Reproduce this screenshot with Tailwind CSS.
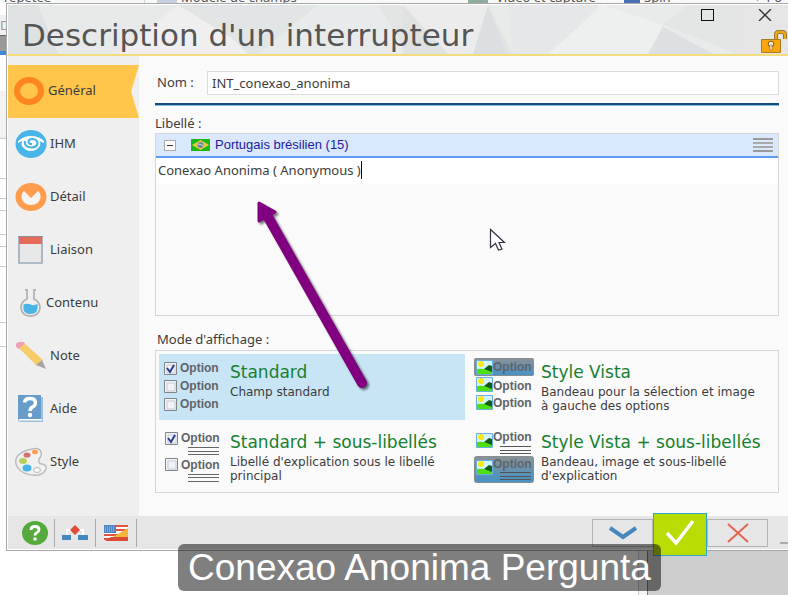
<!DOCTYPE html>
<html lang="fr">
<head>
  <meta charset="UTF-8" />
  <meta name="viewport" content="width=device-width, initial-scale=1.0" />
  <title>Description d'un interrupteur</title>
  <script src="https://cdn.jsdelivr.net/npm/@tailwindcss/browser@4"></script>
</head>
<body class="relative flex flex-col h-screen overflow-hidden bg-white text-[13px] text-[#3c3c3c] font-['Noto_Sans',sans-serif]">
  <!-- Ribbon of the window behind -->
  <div class="flex items-end h-[3px] shrink-0 overflow-hidden bg-[#f8f8f8] text-[#555] leading-3">
    <span class="w-36 shrink-0 pl-1">repetee =</span>
    <span class="flex items-end w-80 shrink-0 gap-1 pl-3 border-l border-gray-300"><i class="w-5 h-3 bg-[#c5cfe0]"></i>Modèle de champs</span>
    <span class="flex items-end w-40 shrink-0 gap-2 pl-1"><i class="w-5 h-3 bg-[#8fac9c]"></i>Vidéo et capture</span>
    <span class="flex items-end w-32 shrink-0 gap-1"><i class="w-4 h-3 bg-[#4770b5]"></i>Spin</span>
    <span class="shrink-0">✦ Po</span>
  </div>

  <div class="flex shrink-0">
    <!-- Left edge of the window behind -->
    <div class="w-[6px] shrink-0 overflow-hidden bg-white">
      <div class="h-3 bg-white"></div>
      <div class="h-5 bg-[#f0f0f0] text-[#999] leading-5">De</div>
      <div class="h-4 bg-[#999] border-t border-[#666]"></div>
      <div class="h-1 bg-[#3c8ad8]"></div>
      <div class="h-9 bg-white"></div>
      <div class="h-12 bg-[#f3f3f3] border-b border-[#ccc]"></div>
      <div class="h-10 border-b border-[#ccc]"></div>
      <div class="h-5 border-b border-[#ccc]"></div>
      <div class="h-3 border-b border-[#ccc]"></div>
      <div class="h-6 border-b border-[#ccc]"></div>
      <div class="h-3 border-b border-[#ccc]"></div>
      <div class="h-5 border-b border-[#ccc]"></div>
      <div class="h-14 border-b border-[#ccc]"></div>
      <div class="h-6 border-b border-[#ccc]"></div>
    </div>

    <!-- Dialog -->
    <main class="flex-1 min-w-0 border-t border-l border-b border-[#a8a8a8] bg-[#fafafa]">
      <header class="relative flex items-center justify-between h-[52px] pl-[14px] border-t border-l border-t-white border-l-white border-b-2 border-b-[#f4dc7c] bg-[#e3e5e5]">
        <svg class="absolute inset-0 w-full h-full" viewBox="0 0 780 50" preserveAspectRatio="none" aria-hidden="true">
          <path d="M0 0H170L120 50H0z" fill="#e8e9e9"/>
          <path d="M30 0L50 50H0V0z" fill="#dfe2e2"/>
          <path d="M170 0L110 50H250z" fill="#efefef"/>
          <path d="M190 0H310L280 50H240z" fill="#e2e5e5"/>
          <path d="M310 0L250 50H400L370 0z" fill="#e8ebeb"/>
          <path d="M395 0H480L500 50H395z" fill="#ececec"/>
          <path d="M395 0L440 50H395z" fill="#e0e2e2"/>
          <path d="M480 0L500 50H465z" fill="#dcdfe1"/>
          <path d="M480 0L505 50H780V0z" fill="#e9eaea"/>
          <path d="M500 0H590L545 50H505z" fill="#e5e7e8"/>
          <path d="M595 0L540 50H640L660 22z" fill="#eeefef"/>
          <path d="M655 22L640 50H705z" fill="#dde0e2"/>
          <path d="M655 20L730 50V0H680z" fill="#e4e5e5"/>
          <path d="M730 0H780V50H730z" fill="#e6e6e6"/>
        </svg>
        <h1 class="relative pt-[10px] text-[31px] leading-10 text-[#555] whitespace-nowrap font-['DejaVu_Sans',sans-serif]">Description d'un interrupteur</h1>
        <div class="relative flex flex-col self-stretch items-end justify-between pt-1">
          <div class="flex items-center gap-11 pr-4">
            <button type="button" aria-label="Agrandir" class="block w-[13px] h-3 border border-[#111]"></button>
            <button type="button" aria-label="Fermer" class="block">
              <svg class="w-[14px] h-3" viewBox="0 0 14 12" stroke="#333" stroke-width="1.4"><path d="M1 0l12 12M13 0L1 12"/></svg>
            </button>
          </div>
          <svg class="w-[27px] h-6" viewBox="0 0 27 24" role="img" aria-label="Déverrouillé">
            <path d="M15 10V5q0-3 3-3h3q3 0 3 3v4" fill="none" stroke="#7c6a2c" stroke-width="4"/>
            <path d="M15 10V5q0-3 3-3h3q3 0 3 3v4" fill="none" stroke="#f0a818" stroke-width="2.5"/>
            <path d="M.5 9.5h19v13h-19z" fill="#f8a60c" stroke="#a8791d"/>
            <circle cx="10" cy="14" r="2.8" fill="#f8f1d8" stroke="#795a1b"/>
            <path d="M9 15h2v5H9z" fill="#fff" stroke="#795a1b" stroke-width=".6"/>
          </svg>
        </div>
      </header>

      <div class="flex border-l border-white">
        <!-- Sidebar -->
        <nav class="w-[131px] h-[460px] shrink-0 pt-[9px] bg-[#efefef]">
          <a href="#general" class="flex items-center h-[53px] gap-[3px] pb-[2px] pl-[5px] bg-[#ffc64b] [clip-path:polygon(0_0,100%_0,94%_50%,100%_100%,0_100%)]">
            <svg class="w-8 h-8" viewBox="0 0 32 32"><ellipse cx="16" cy="16" rx="12" ry="11" fill="none" stroke="#ff8520" stroke-width="6"/></svg>
            Général
          </a>
          <a href="#ihm" class="flex items-center h-[53px] gap-[3px] pb-[2px] pl-[7px]">
            <svg class="w-8 h-8" viewBox="0 0 32 32"><ellipse cx="16" cy="16" rx="15.500" ry="14" fill="#48b4e7"/><path d="M3 13Q9 8 16 8q8 0 13 5v2q-3-1-4-2 1 4-1 6-3 4-8 4-6 0-9-5-1-2 0-5-2 1-4 2z" fill="#fff"/><path d="M10 13q-1 6 6 6.500 6 0 6.500-4 0-4-5-4.500-4 0-4 3 .5 2 3.500 2" fill="none" stroke="#48b4e7" stroke-width="2.200"/></svg>
            IHM
          </a>
          <a href="#detail" class="flex items-center h-[53px] gap-[3px] pb-[2px] pl-[7px]">
            <svg class="w-8 h-8" viewBox="0 0 32 32"><ellipse cx="16" cy="16" rx="15.500" ry="14" fill="#ff9c4e"/><path d="M9 10q-3 3-2.500 7 2 7 9.500 7t9.500-7q.5-4-2.500-7l-7 7z" fill="#f4f4f4"/></svg>
            Détail
          </a>
          <a href="#liaison" class="flex items-center h-[53px] gap-[3px] pb-[2px] pl-[7px]">
            <svg class="w-8 h-8" viewBox="0 0 32 32"><path d="M4 3h23v26H4z" fill="#e8e8e8" stroke="#9babb8" stroke-width="1.6"/><path d="M4 3h23v7H4z" fill="#e66a5a"/><path d="M3 2.500h25" stroke="#8d8f9c"/></svg>
            Liaison
          </a>
          <a href="#contenu" class="flex items-center h-[53px] gap-[3px] pb-[2px] pl-[7px]">
            <svg class="w-7 h-8" viewBox="0 0 28 32"><path d="M10 3h2v9Q5.500 15 6 21q1 8 9.500 8t9.500-8Q25 15 19 12V3h2" fill="none" stroke="#b3b3b3" stroke-width="1.8"/><path d="M8.500 17.500q4-1.500 7 0t7-.5q1.500 10-7 10t-7-9.500z" fill="#48b4e7"/></svg>
            Contenu
          </a>
          <a href="#note" class="flex items-center h-[53px] gap-[3px] pb-[2px] pl-[7px]">
            <svg class="w-8 h-8" viewBox="0 0 32 32"><path d="M4 8L9 3l19 17-6 6z" fill="#f8cb69"/><path d="M1 6q-1-3 3-4 4-1 6 1L4 9Q1 8 1 6z" fill="#efa0b4"/><path d="M27 20l4 9-10-4z" fill="#a6a6a6"/></svg>
            Note
          </a>
          <a href="#aide" class="flex items-center h-[53px] gap-[3px] pb-[2px] pl-[7px]">
            <svg class="w-8 h-8" viewBox="0 0 32 32"><path d="M7 4h21v25H6q-3 0-3-3z" fill="#9bbfdf"/><path d="M3 26h24v1.500H4z" fill="#fff"/><path d="M3 2h23v24H4v2l-1-2z" fill="#689dca"/><path d="M9.500 9.500q.5-4 5.500-4t5.500 4q0 3-3 4.500-2.500 1.500-2.500 4" fill="none" stroke="#fff" stroke-width="3.400"/><circle cx="15" cy="22" r="2.200" fill="#fff"/></svg>
            Aide
          </a>
          <a href="#style" class="flex items-center h-[53px] gap-[3px] pb-[2px] pl-[7px]">
            <svg class="w-8 h-8" viewBox="0 0 32 32"><path d="M17 3Q24 1 26 6q1 4-2 7-1 5 3 5 5 1 4 5-2 5-8 6-10 1-17-4-8-7-4-14Q6 5 17 3z" fill="#f1f1f1" stroke="#bcbcbc" stroke-width="1.500"/><ellipse cx="20" cy="6" rx="3" ry="2.200" fill="#ff9c4e"/><ellipse cx="12" cy="9" rx="3.500" ry="2.600" fill="#d8706a"/><ellipse cx="8" cy="15" rx="4" ry="3" fill="#b9d058"/><ellipse cx="12" cy="22" rx="4.500" ry="3.500" fill="#48b4e7"/><ellipse cx="22" cy="24" rx="3.500" ry="2.500" fill="#f8f8f8" stroke="#b8b8b8"/></svg>
            Style
          </a>
        </nav>

        <!-- Content -->
        <section class="flex-1 min-w-0 pl-4 pr-[9px] pt-[15px]">
          <div class="flex items-center">
            <label for="nom" class="w-[52px] shrink-0 pl-[2px]">Nom :</label>
            <input id="nom" type="text" value="INT_conexao_anonima" class="flex-1 min-w-0 h-6 px-1 border border-[#dcdcdc] bg-white" />
          </div>
          <hr class="h-[3px] mt-2 border-0 border-t-2 border-[#184a80] bg-[#80c4e4]" />

          <label for="libelle" class="block mt-2 leading-[18px]">Libellé :</label>
          <div class="h-[183px] mt-px border border-[#d5d5da]">
            <div class="flex items-center h-6 pl-2 pr-[5px] border-b-2 border-[#5c9cf5] bg-[#dae8fd] text-[#1c1ca0] font-['Liberation_Sans',sans-serif]">
              <button type="button" aria-label="Réduire" class="flex items-center justify-center w-3 h-[11px] mr-[15px] border border-[#aaa] bg-white"><span class="w-[6px] h-px bg-[#333]"></span></button>
              <svg class="w-[19px] h-3 mr-[5px]" viewBox="0 0 19 12"><path d="M0 0h19v12H0z" fill="#18b818"/><path d="M9.500 1L18 6l-8.500 5L1 6z" fill="#e8c840"/><circle cx="9.500" cy="6" r="3" fill="#6a88a0"/><path d="M7 5q3 0 5 2" stroke="#d0d8d8" fill="none"/></svg>
              <span class="flex-1">Portugais brésilien (15)</span>
              <button type="button" aria-label="Menu" class="flex flex-col gap-[2px]">
                <span class="w-5 h-[2px] bg-[#999]"></span>
                <span class="w-5 h-[2px] bg-[#aaa]"></span>
                <span class="w-5 h-[2px] bg-[#aaa]"></span>
                <span class="w-5 h-[2px] bg-[#999]"></span>
              </button>
            </div>
            <div class="flex items-center h-[26px] pb-[2px] pl-[2px] bg-white">
              <input id="libelle" type="text" value="Conexao Anonima ( Anonymous )" class="field-sizing-content h-5" />
              <span class="w-px h-[18px] bg-black"></span>
            </div>
          </div>

          <fieldset class="mt-[11px]">
            <legend class="pl-[2px] leading-6">Mode d'affichage :</legend>
            <div class="grid grid-cols-2 gap-x-1 gap-y-1 h-[143px] mt-[-1px] p-[3px] border border-[#d5d5da] font-['DejaVu_Sans',sans-serif] text-xs leading-[14px]">
              <label class="relative flex gap-[7px] pl-[5px] bg-[#c8e5f5]">
                <input type="radio" name="mode" class="sr-only" checked />
                <svg class="w-[59px] h-[66px] shrink-0 font-['Liberation_Sans',sans-serif] text-xs font-bold" viewBox="0 0 59 66" fill="#606468">
                  <g fill="#f0f3f8" stroke="#828488"><path d="M.5 8.500h12v12H.5zM.5 26.500h12v12H.5zM.5 44.500h12v12H.5z"/><path d="M3 11h8v8H3zM3 29h8v8H3zM3 47h8v8H3z" stroke="#c5cbd5"/></g>
                  <path d="M3 14l3 4 4-7" fill="none" stroke="#283c94" stroke-width="2"/>
                  <text x="16" y="18">Option</text><text x="16" y="36">Option</text><text x="16" y="54">Option</text>
                </svg>
                <span class="pt-[5px]"><b class="block text-[17px] leading-[26px] font-normal text-[#168030]">Standard</b>Champ standard</span>
              </label>
              <label class="relative flex gap-[7px] pl-[5px]">
                <input type="radio" name="mode" class="sr-only" />
                <svg class="w-[60px] h-[66px] shrink-0 font-['Liberation_Sans',sans-serif] text-xs font-bold" viewBox="0 0 60 66" fill="#606468">
                  <defs>
                    <linearGradient id="band" x2="0" y2="1"><stop stop-color="#8b9196"/><stop offset="1" stop-color="#4293c6"/></linearGradient>
                    <g id="pic"><path d="M.5.5h16v14H.5z" fill="#d2f3fb" stroke="#69aee0"/><circle cx="5" cy="4" r="3" fill="#f8e818"/><path d="M1 9q8-1 15 2v3H1z" fill="#4de010"/><path d="M8 9l5-4 3 1v6z" fill="#155b18"/></g>
                  </defs>
                  <rect x=".5" y="4.500" width="59" height="17" rx="1" fill="url(#band)" stroke="#8a8d90"/>
                  <use href="#pic" x="2" y="6"/><use href="#pic" x="2" y="23"/><use href="#pic" x="2" y="41"/>
                  <text x="19" y="17">Option</text><text x="19" y="36">Option</text><text x="19" y="53">Option</text>
                </svg>
                <span class="pt-[5px]"><b class="block text-[17px] leading-[26px] font-normal text-[#168030]">Style Vista</b>Bandeau pour la sélection et image<br />à gauche des options</span>
              </label>
              <label class="relative flex gap-[7px] pl-[5px]">
                <input type="radio" name="mode" class="sr-only" />
                <svg class="w-[59px] h-[66px] shrink-0 font-['Liberation_Sans',sans-serif] text-xs font-bold" viewBox="0 0 59 66" fill="#606468">
                  <g fill="#f0f3f8" stroke="#828488"><path d="M1.500 8.500h12v12h-12zM1.500 34.500h12v12h-12z"/><path d="M4 11h8v8H4zM4 37h8v8H4z" stroke="#c5cbd5"/></g>
                  <path d="M4 14l3 4 4-7" fill="none" stroke="#283c94" stroke-width="2"/>
                  <text x="17" y="18">Option</text><text x="17" y="45">Option</text>
                  <path d="M24 23.500h31M24 27.500h31M24 30.500h31M24 50.500h31M24 53.500h31M24 57.500h31" stroke="#666"/>
                </svg>
                <span class="pt-[5px]"><b class="block text-[17px] leading-[26px] font-normal text-[#168030]">Standard + sous-libellés</b>Libellé d'explication sous le libellé<br />principal</span>
              </label>
              <label class="relative flex gap-[7px] pl-[5px]">
                <input type="radio" name="mode" class="sr-only" />
                <svg class="w-[60px] h-[66px] shrink-0 font-['Liberation_Sans',sans-serif] text-xs font-bold" viewBox="0 0 60 66" fill="#606468">
                  <rect x=".5" y="32.500" width="59" height="26" rx="2" fill="url(#band)" stroke="#8a8d90"/>
                  <use href="#pic" x="2" y="9"/><use href="#pic" x="2" y="36"/>
                  <text x="19" y="17">Option</text><text x="19" y="44">Option</text>
                  <path d="M26 22.500h31M26 26.500h31M26 29.500h31M26 48.500h31M26 52.500h31M26 55.500h31" stroke="#555"/>
                </svg>
                <span class="pt-[5px]"><b class="block text-[17px] leading-[26px] font-normal text-[#168030] whitespace-nowrap">Style Vista + sous-libellés</b>Bandeau, image et sous-libellé<br />d'explication</span>
              </label>
            </div>
          </fieldset>
        </section>
      </div>

      <!-- Toolbar -->
      <footer class="flex items-center justify-between h-[34px] pl-px border-l border-b border-white bg-[#e6e6e6]">
        <div class="flex h-7">
          <button type="button" aria-label="Aide" class="flex items-center justify-end w-[46px] pr-[6px] border-r border-[#aaa]">
            <svg class="w-[26px] h-6" viewBox="0 0 26 24"><ellipse cx="13" cy="12" rx="13" ry="12" fill="#56aa3d"/><path d="M9 9q0-3.500 4-3.500t4 3q0 2-2 3t-2 3" fill="none" stroke="#fff" stroke-width="2.800"/><circle cx="13" cy="18" r="1.800" fill="#fff"/></svg>
          </button>
          <button type="button" aria-label="Arborescence" class="flex items-center justify-center w-[41px] border-r border-[#aaa]">
            <svg class="w-[26px] h-4" viewBox="0 0 26 16"><path d="M5 10V5h16v5" fill="none" stroke="#fff" stroke-width="2"/><path d="M13 0l5 5-5 5-5-5z" fill="#e04c38"/><path d="M0 10h9v5H0zM16 10h10v5H16z" fill="#4688be"/></svg>
          </button>
          <button type="button" aria-label="Langues" class="flex items-center justify-center w-[41px] border-r border-[#aaa]">
            <svg class="w-6 h-4" viewBox="0 0 24 16"><path d="M0 0h24v16H0z" fill="#fff"/><path d="M12 0h12v2H12zM12 4h12v2H12zM0 9h14v2H0zM0 13h10v2H0z" fill="#e25443"/><path d="M0 0h12v8H0z" fill="#4f86bd"/><path d="M1 2h10M1 4h10M1 6h10" stroke="#a8c8e6" stroke-dasharray="1 1"/><path d="M24 3v13H2z" fill="#f3b73d"/><path d="M7 12L1 16h23v-4z" fill="#dc4937"/></svg>
          </button>
        </div>
        <div class="flex items-center">
          <button type="button" aria-label="Suivant" class="flex items-center justify-center w-[61px] h-7 border border-[#b4b4b4]">
            <svg class="w-7 h-[14px]" viewBox="0 0 28 14"><path d="M1 2l13 9L27 2" fill="none" stroke="#4688be" stroke-width="4"/></svg>
          </button>
          <button type="button" aria-label="Valider" class="relative z-10 flex items-center justify-center w-[54px] h-[43px] -mt-1 -mb-2 pb-1 border border-[#30a5cf] bg-[#b9dc04]">
            <svg class="w-7 h-7" viewBox="0 0 28 28"><path d="M1 14l9 10L27 2" fill="none" stroke="#fff" stroke-width="3.500"/></svg>
          </button>
          <button type="button" aria-label="Annuler" class="flex items-center justify-center w-[61px] h-7 border border-[#b4b4b4]">
            <svg class="w-[22px] h-5" viewBox="0 0 22 20"><path d="M1 1l20 18M21 1L1 19" stroke="#e06450" stroke-width="2"/></svg>
          </button>
          <span class="w-2 h-[2px] mt-5 ml-3 bg-[#aaa]"></span>
        </div>
      </footer>
    </main>
  </div>

  <!-- Bottom of the window behind -->
  <div class="flex flex-1">
    <div class="flex-1 bg-white"></div>
    <div class="w-[9px] border-l border-[#ccc] bg-[#f4f4f4]"></div>
    <div class="w-[141px] border-l border-[#3c8ad8] bg-[#cdcdcd]"></div>
  </div>

  <!-- Annotation arrow -->
  <svg class="absolute left-[250px] top-[195px] w-[130px] h-[205px] pointer-events-none drop-shadow-[2px_2px_1px_#0008]" viewBox="0 0 130 205">
    <path d="M18 22L112 188" stroke="#800080" stroke-width="10" stroke-linecap="round"/>
    <path d="M9 8l16 9-16 9z" fill="#800080" stroke="#800080" stroke-width="3" stroke-linejoin="round"/>
  </svg>
  <!-- Mouse pointer -->
  <svg class="absolute left-[489px] top-[228px] w-[18px] h-6 pointer-events-none" viewBox="0 0 18 24"><path d="M1.500 1.500v18l5-4 3 6.500 3.500-1-3-6.500h5.500z" fill="#fff" stroke="#333344" stroke-width="1.200"/></svg>
  <!-- Caption -->
  <p class="absolute left-[178px] top-[544px] z-20 px-[10px] rounded-md bg-black/50 text-white text-[37px] leading-[47px] whitespace-nowrap font-['Liberation_Sans',sans-serif]">Conexao Anonima Pergunta</p>
</body>
</html>
